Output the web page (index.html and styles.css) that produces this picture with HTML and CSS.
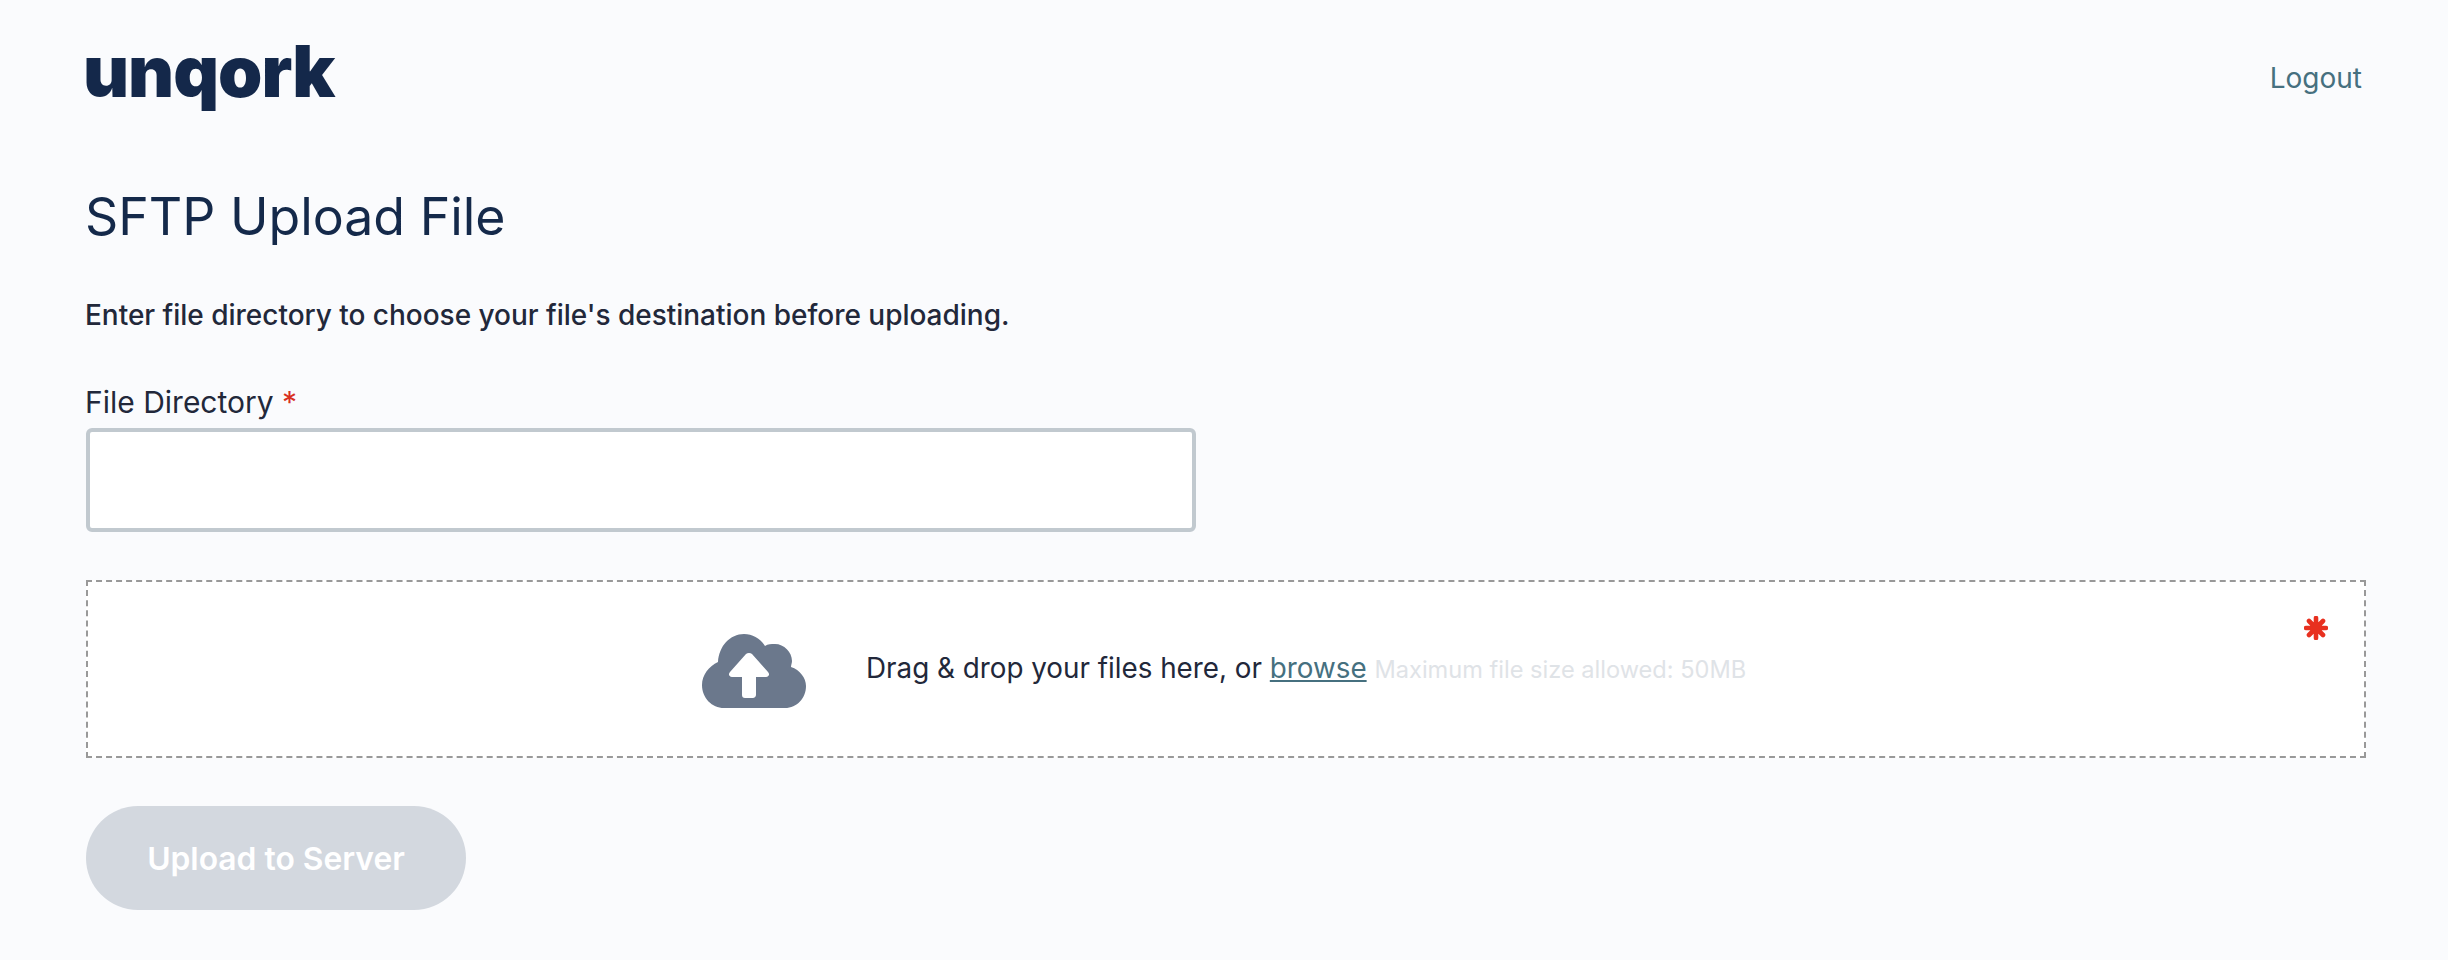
FILE: index.html
```html
<!DOCTYPE html>
<html lang="en">
<head>
<meta charset="utf-8">
<title>SFTP Upload File</title>
<link rel="stylesheet" href="styles.css">
</head>
<body>
<div class="page">
  <header class="topbar">
    <span class="logo">unqork</span>
    <a class="logout" href="#">Logout</a>
  </header>
  <h1 class="title">SFTP Upload File</h1>
  <p class="intro">Enter file directory to choose your file's destination before uploading.</p>
  <label class="label" for="dir">File Directory <span class="req">*</span></label>
  <input class="input" id="dir" type="text">
  <div class="drop">
    <svg class="cloud" viewBox="0 0 104 74" aria-hidden="true">
      <path fill="#6b788c" d="M22 74C10 74 0 64 0 51 0 41 7 32 16 28 17 12 28 0 42 0 51 0 59 5 63 12 66 10 69 10 73 10 82 10 90 18 90 27 90 29 89 31 89 33 98 36 104 44 104 52 104 64 95 74 83 74Z"/>
      <path fill="#fff" d="M44 20C45.5 18.500 48.500 18.500 50 20L66 38C68 40 67 43 64 43H54V61C54 63 52 64 51 64H43C41 64 40 63 40 61V43H30C27 43 26 40 28 38Z"/>
    </svg>
    <div class="drop-text">
      <span>Drag &amp; drop your files here, or </span><a class="browse" href="#">browse</a>
      <span class="limit">Maximum file size allowed: 50MB</span>
    </div>
    <svg class="star" viewBox="0 0 24 24" aria-hidden="true">
      <g stroke="#e8301f" stroke-width="4.6" stroke-linecap="round">
        <path d="M12 2v20M2 12h20M5 5l14 14M19 5L5 19"/>
      </g>
      <circle cx="12" cy="12" r="6" fill="#e8301f"/>
    </svg>
  </div>
  <button class="submit" type="button">Upload to Server</button>
</div>
</body>
</html>
```
FILE: styles.css
```css
* { box-sizing: border-box; }
html, body { margin: 0; height: 100%; }
body {
  background: #fafbfd;
  color: #22283a;
  font-family: Inter, "Liberation Sans", sans-serif;
  overflow: hidden;
}
.page { padding: 0 82px 0 86px; display: flex; flex-direction: column; align-items: flex-start; }
.topbar { width: 100%; height: 156px; display: flex; justify-content: space-between; align-items: flex-start; }
.logo {
  margin-top: 26px;
  margin-left: -3px;
  font-size: 71px;
  line-height: 90px;
  font-weight: 900;
  letter-spacing: -1px;
  color: #14284a;
}
.logout { margin-top: 58px; margin-right: 4px; font-size: 28px; line-height: 40px; color: #46707f; text-decoration: none; }
.title { margin: 30px 0 0 -1px; font-size: 51.8px; line-height: 60px; font-weight: 400; color: #14294a; }
.intro { margin: 49px 0 0 -1px; font-size: 28px; line-height: 40px; font-weight: 500; letter-spacing: -0.02px; }
.label { margin: 47px 0 0 -1px; font-size: 30px; line-height: 40px; }
.req { color: #d8301f; }
.input { display: block; margin-top: 6px; width: 1110px; height: 104px; background: #fff; border: 4px solid #c1c9cf; border-radius: 6px; }
.drop {
  position: relative;
  width: 100%;
  height: 178px;
  margin-top: 48px;
  background: #fff;
  border: 2px dashed #999;
  display: flex;
  align-items: center;
  padding-left: 614px;
}
.cloud { width: 104px; height: 74px; margin-top: 4px; flex: none; }
.drop-text { margin-left: 60px; font-size: 27.8px; line-height: 40px; margin-top: -1px; }
.browse { color: #46707f; text-decoration: underline; }
.limit { font-size: 23.6px; color: #dfe3e7; }
.star { position: absolute; top: 34px; right: 36px; width: 24px; height: 24px; }
.submit {
  margin-top: 48px;
  width: 380px;
  height: 104px;
  border: 0;
  border-radius: 52px;
  padding: 2px 0 0;
  background: #d3d8df;
  color: #fff;
  font: 600 31.8px/40px Inter, "Liberation Sans", sans-serif;
}
```
